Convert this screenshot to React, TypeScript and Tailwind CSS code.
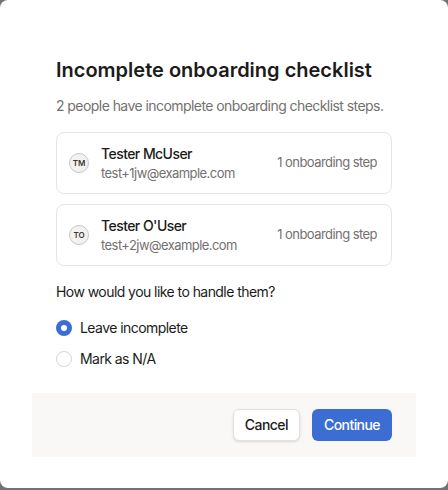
import { useState } from "react";

type Person = {
  initials: string;
  name: string;
  email: string;
  steps: string;
};

const people: Person[] = [
  { initials: "TM", name: "Tester McUser", email: "test+1jw@example.com", steps: "1 onboarding step" },
  { initials: "TO", name: "Tester O'User", email: "test+2jw@example.com", steps: "1 onboarding step" },
];

const options = [
  { id: "leave", label: "Leave incomplete" },
  { id: "na", label: "Mark as N/A" },
];

export default function App() {
  const [choice, setChoice] = useState("leave");

  return (
    <div className="h-[490px] w-[448px] bg-[#727272] font-['Inter',sans-serif] tracking-[-0.035em] text-[#1c1b1a]">
      <div className="flex h-[488px] flex-col rounded-lg bg-white p-8">
        <div className="px-6 pb-6 pt-6">
          <h2 className="text-xl font-semibold leading-7 tracking-normal">Incomplete onboarding checklist</h2>
          <p className="mt-3 text-sm leading-5 text-[#737170]">
            2 people have incomplete onboarding checklist steps.
          </p>

          <div className="mt-4 flex flex-col gap-2.5">
            {people.map((p) => (
              <div
                key={p.email}
                className="flex items-center gap-3 rounded-lg border border-[#e8e5e2] py-[10px] pl-3 pr-3.5"
              >
                <div className="flex h-5 w-5 shrink-0 items-center justify-center rounded-full border border-[#c9c5c2] bg-[#f3f2f1] text-[8px] font-semibold tracking-normal text-[#3a3836]">
                  {p.initials}
                </div>
                <div className="min-w-0 flex-1">
                  <p className="text-sm font-medium leading-[21px]">{p.name}</p>
                  <p className="text-[13px] leading-[19px] text-[#737170]">{p.email}</p>
                </div>
                <span className="text-[13px] text-[#737170]">{p.steps}</span>
              </div>
            ))}
          </div>

          <p className="mt-4 text-sm leading-5">How would you like to handle them?</p>

          <div className="mt-4 flex flex-col gap-[11px]">
            {options.map((o) => {
              const checked = choice === o.id;
              return (
                <button
                  key={o.id}
                  type="button"
                  onClick={() => setChoice(o.id)}
                  className="flex h-5 items-center gap-2 text-left text-sm"
                >
                  {checked ? (
                    <span className="flex h-4 w-4 items-center justify-center rounded-full bg-[#3b6dd3]">
                      <span className="h-1.5 w-1.5 rounded-full bg-white" />
                    </span>
                  ) : (
                    <span className="h-4 w-4 rounded-full border border-[#d9d5d2] bg-white" />
                  )}
                  <span>{o.label}</span>
                </button>
              );
            })}
          </div>
        </div>

        <div className="flex items-center justify-end gap-3 bg-[#f9f8f7] px-6 py-4">
          <button
            type="button"
            className="h-8 rounded-md border border-[#e3e0dd] bg-white px-[11px] text-sm font-medium shadow-sm"
          >
            Cancel
          </button>
          <button
            type="button"
            className="h-8 rounded-md bg-[#3b6dd3] px-3 text-sm font-medium text-white"
          >
            Continue
          </button>
        </div>
      </div>
    </div>
  );
}
